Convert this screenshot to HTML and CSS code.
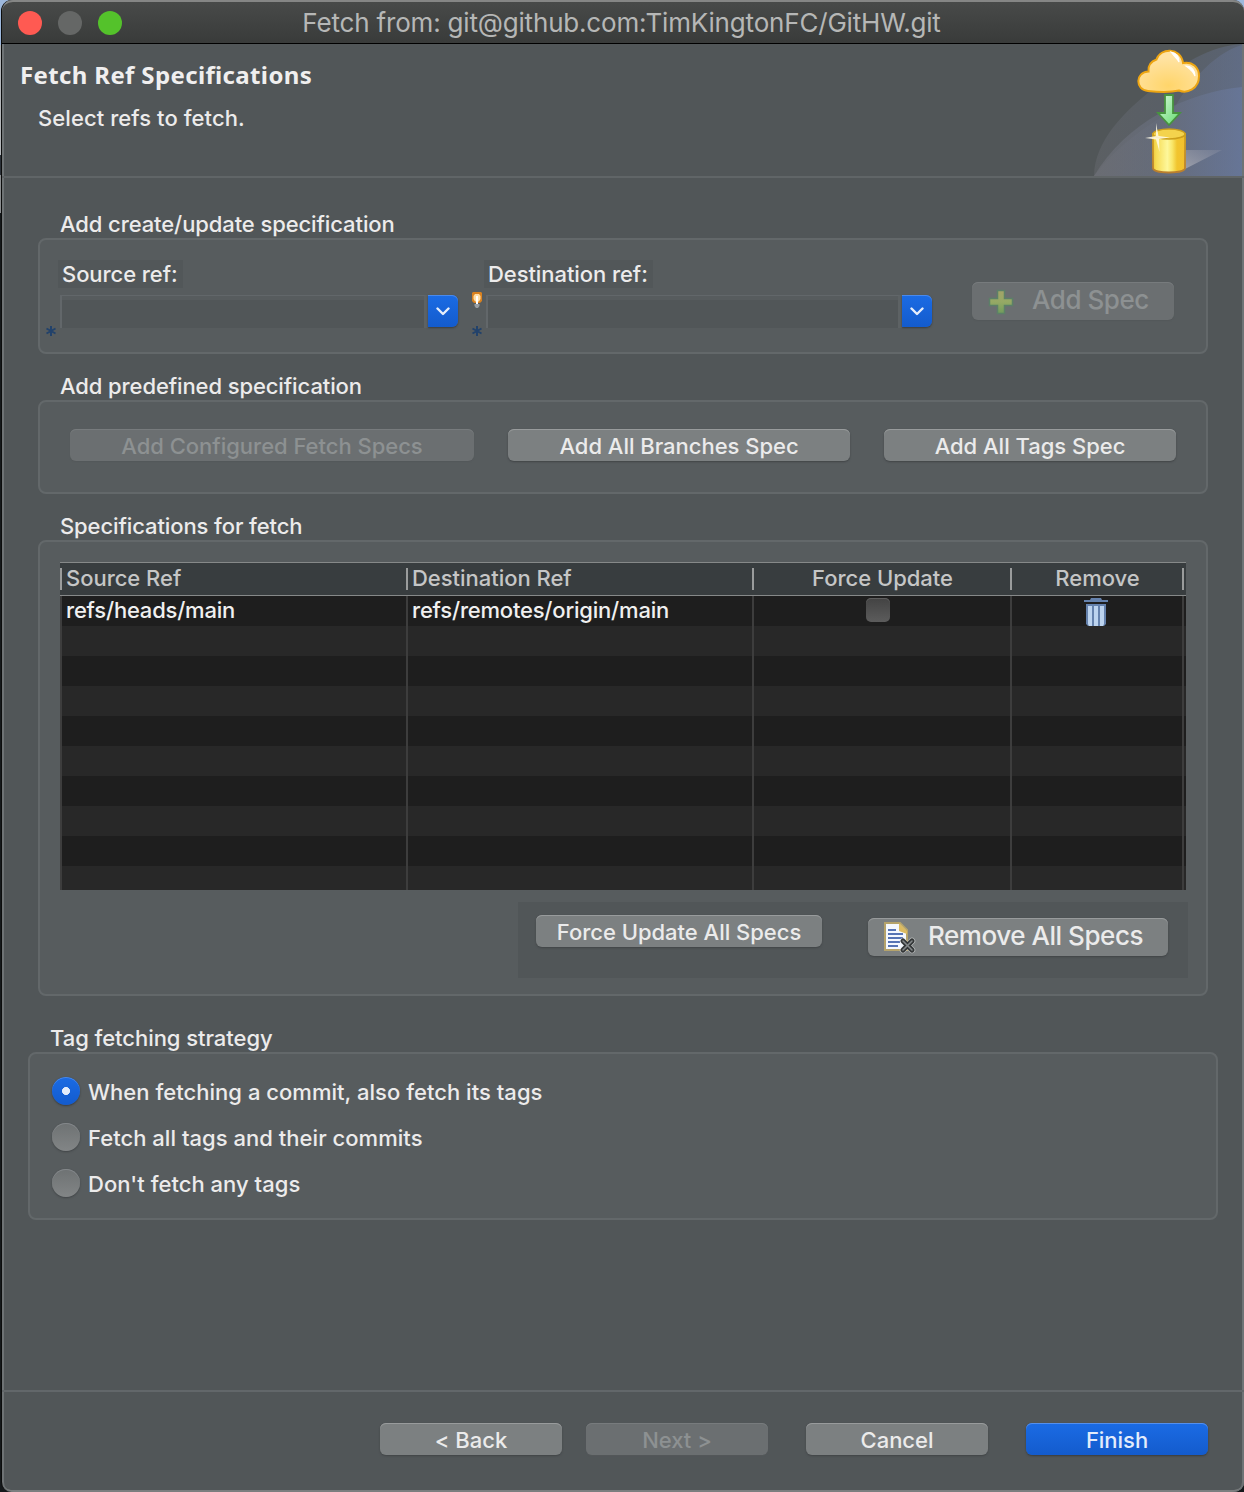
FILE: index.html
```
<!DOCTYPE html>
<html lang="en">
<head>
<meta charset="utf-8">
<title>Fetch from: git@github.com:TimKingtonFC/GitHW.git</title>
<link rel="stylesheet" href="styles.css">
</head>
<body>
<main class="window">
  <header class="titlebar">
    <div class="lights">
      <span class="light light-close"></span>
      <span class="light light-min"></span>
      <span class="light light-zoom"></span>
    </div>
    <div class="window-title">Fetch from: git@github.com:TimKingtonFC/GitHW.git</div>
  </header>

  <section class="banner">
    <div class="banner-text">
      <h1>Fetch Ref Specifications</h1>
      <p>Select refs to fetch.</p>
    </div>
    <svg class="banner-art" width="150" height="132" viewBox="0 0 150 132">
      <defs>
        <linearGradient id="wash" x1="0" x2="1" y1="0" y2="0">
          <stop offset="0" stop-color="#6e7077"/><stop offset=".45" stop-color="#686f7f"/><stop offset="1" stop-color="#6a7aa0"/>
        </linearGradient>
        <radialGradient id="cloud" cx=".5" cy=".85" r=".7">
          <stop offset="0" stop-color="#ffd56a"/><stop offset="1" stop-color="#ffe3a4"/>
        </radialGradient>
        <linearGradient id="arrow" x1="0" x2="1" y1="0" y2="1">
          <stop offset="0" stop-color="#d8f5dc"/><stop offset="1" stop-color="#62dd6c"/>
        </linearGradient>
        <linearGradient id="drum" x1="0" x2="1" y1="0" y2="0">
          <stop offset="0" stop-color="#eec93a"/><stop offset=".1" stop-color="#f6dc55"/><stop offset=".45" stop-color="#fdf79b"/><stop offset=".6" stop-color="#f9e76a"/><stop offset=".75" stop-color="#f1c52f"/><stop offset="1" stop-color="#f3c02c"/>
        </linearGradient>
        <linearGradient id="rim" x1="0" x2="0" y1="0" y2="1">
          <stop offset="0" stop-color="#d3a51c"/><stop offset="1" stop-color="#b97e2e"/>
        </linearGradient>
        <linearGradient id="shade" x1="0" x2="1" y1="1" y2="0">
          <stop offset="0" stop-color="#a6a8b2" stop-opacity=".85"/><stop offset="1" stop-color="#8f94a5" stop-opacity=".3"/>
        </linearGradient>
      </defs>
      <path d="M2 132C3 96 32 68 62 44C88 20 118 2 150 0V132Z" fill="url(#wash)" opacity=".36"/>
      <path d="M2 132C26 102 50 84 82 66C90 46 122 8 150 1V132Z" fill="url(#wash)" opacity=".4"/>
      <path d="M2 132C34 78 96 48 150 43V132Z" fill="url(#wash)" opacity=".65"/>
      <path d="M93 106H130L93 125Z" fill="url(#shade)"/>
      <path d="M56 47C43 46 43 28 56.500 27.500C56 21 60 17 64.500 15.500C68 3.500 89 3 91 19C101 17 107 24 107 32C107 45 95 50 87 46.500C78 48.500 66 48 56 47Z" fill="url(#cloud)" stroke="#eda512" stroke-width="2"/>
      <path d="M79 8C84 9 87 13 87 18C85 14 82 12 79 8ZM94 22C100 22 103 27 103 32C101 27 98 25 94 22Z" fill="#fff" stroke="#fff" stroke-width="1.2"/>
      <path d="M73 51H81V69H88L77 81L66 69H73Z" fill="url(#arrow)" stroke="#47933f" stroke-width="1.8"/>
      <path d="M61 90V124C61 130 93 130 93 124V90Z" fill="url(#drum)" stroke="url(#rim)" stroke-width="1.8"/>
      <ellipse cx="77" cy="90" rx="16" ry="5" fill="#f4d34d" stroke="#cc9f1c" stroke-width="1.6"/>
      <path d="M64 79L66.500 92L78 93.500L67 95L67.500 108L64 95.500L53 94L64 92Z" fill="#fffbe8" opacity=".85"/>
    </svg>
  </section>

  <section class="content">
    <h2 class="group-label">Add create/update specification</h2>
    <div class="group create">
      <div class="field field-src">
        <label class="chip">Source ref:</label>
        <div class="combo">
          <div class="combo-text"></div>
          <div class="combo-btn"><svg width="14" height="9" viewBox="0 0 14 9"><path d="M1.5 1.5L7 7L12.500 1.500" fill="none" stroke="#e6eefb" stroke-width="2.400" stroke-linecap="round" stroke-linejoin="round"/></svg></div>
          <svg class="star" width="12" height="12" viewBox="0 0 12 12"><path d="M6 1V11M1.500 3.500L10.500 8.500M10.500 3.500L1.500 8.500" stroke="#22426b" stroke-width="2"/></svg>
        </div>
      </div>
      <div class="field field-dst">
        <label class="chip">Destination ref:</label>
        <div class="combo">
          <div class="combo-text"></div>
          <div class="combo-btn"><svg width="14" height="9" viewBox="0 0 14 9"><path d="M1.5 1.5L7 7L12.500 1.500" fill="none" stroke="#e6eefb" stroke-width="2.400" stroke-linecap="round" stroke-linejoin="round"/></svg></div>
          <svg class="bulb" width="12" height="16" viewBox="0 0 12 16"><path d="M2 0H10L11 1V9L9 11H3L1 9V1Z" fill="#d9811f"/><path d="M4 2H8L9.500 4V7L8 9.500H4L2.500 7V4Z" fill="#ffdfa6"/><path d="M5 4H7V12H5Z" fill="#fff"/><path d="M3.500 12H8.500V14L7 16H5L3.500 14Z" fill="#9a9fa3"/></svg>
          <svg class="star" width="12" height="12" viewBox="0 0 12 12"><path d="M6 1V11M1.500 3.500L10.500 8.500M10.500 3.500L1.500 8.500" stroke="#22426b" stroke-width="2"/></svg>
        </div>
      </div>
      <button class="btn btn-large btn-off add-spec">
        <svg width="26" height="26" viewBox="0 0 26 26"><defs><linearGradient id="plus" x1="0" x2="0" y1="0" y2="1"><stop offset="0" stop-color="#a3a468"/><stop offset=".5" stop-color="#95a965"/><stop offset="1" stop-color="#6f9c5c"/></linearGradient></defs><path d="M9.500 1.500H16.500V9.500H24.500V16.500H16.500V24.500H9.500V16.500H1.500V9.500H9.500Z" fill="url(#plus)" stroke="#5c8068" stroke-width="1.500"/></svg>
        <span>Add Spec</span>
      </button>
    </div>

    <h2 class="group-label">Add predefined specification</h2>
    <div class="group predefined">
      <button class="btn btn-off configured">Add Configured Fetch Specs</button>
      <button class="btn branches">Add All Branches Spec</button>
      <button class="btn tags">Add All Tags Spec</button>
    </div>

    <h2 class="group-label">Specifications for fetch</h2>
    <div class="group specs">
      <div class="table">
        <div class="row head">
          <div class="cell">Source Ref</div><div class="cell">Destination Ref</div><div class="cell mid">Force Update</div><div class="cell mid">Remove</div><div class="cell"></div>
        </div>
        <div class="row">
          <div class="cell">refs/heads/main</div><div class="cell">refs/remotes/origin/main</div>
          <div class="cell mid"><span class="check"></span></div>
          <div class="cell mid"><svg class="trash" width="24" height="28" viewBox="0 0 24 28"><path d="M7 0H17L18 2H24V4H0V2H6Z" fill="#6582ad"/><path d="M2 6H22V26L20 28H4L2 26Z" fill="#6582ad"/><path d="M4 8H8V28H5L4 26ZM10 8H14V28H10ZM16 8H20V26L19 28H16Z" fill="#bcd3ee"/></svg></div>
          <div class="cell"></div>
        </div>
        <div class="row"><div class="cell"></div><div class="cell"></div><div class="cell"></div><div class="cell"></div><div class="cell"></div></div>
        <div class="row"><div class="cell"></div><div class="cell"></div><div class="cell"></div><div class="cell"></div><div class="cell"></div></div>
        <div class="row"><div class="cell"></div><div class="cell"></div><div class="cell"></div><div class="cell"></div><div class="cell"></div></div>
        <div class="row"><div class="cell"></div><div class="cell"></div><div class="cell"></div><div class="cell"></div><div class="cell"></div></div>
        <div class="row"><div class="cell"></div><div class="cell"></div><div class="cell"></div><div class="cell"></div><div class="cell"></div></div>
        <div class="row"><div class="cell"></div><div class="cell"></div><div class="cell"></div><div class="cell"></div><div class="cell"></div></div>
        <div class="row"><div class="cell"></div><div class="cell"></div><div class="cell"></div><div class="cell"></div><div class="cell"></div></div>
        <div class="row"><div class="cell"></div><div class="cell"></div><div class="cell"></div><div class="cell"></div><div class="cell"></div></div>
        <div class="row last"><div class="cell"></div><div class="cell"></div><div class="cell"></div><div class="cell"></div><div class="cell"></div></div>
      </div>
      <div class="actions">
        <button class="btn force">Force Update All Specs</button>
        <button class="btn btn-large remove-all">
          <svg width="32" height="32" viewBox="0 0 32 32"><path d="M1 1H16L23 8V28H1Z" fill="#f4f8ff" stroke="#b5a36b" stroke-width="2"/><path d="M15 1L23 9V12L15 9Z" fill="#dcbb62"/><path d="M4 8H12M4 12H19M4 16H19M4 20H16M4 24H14" stroke="#5674b5" stroke-width="2"/><path d="M19 19L28 28M28 19L19 28" stroke="#e4e6e6" stroke-width="6.500" stroke-linecap="round" opacity=".55"/><path d="M19 19L28 28M28 19L19 28" stroke="#333637" stroke-width="5" stroke-linecap="round"/><path d="M19 19L28 28M28 19L19 28" stroke="#84898a" stroke-width="1.600" stroke-linecap="round"/></svg>
          <span>Remove All Specs</span>
        </button>
      </div>
    </div>

    <h2 class="group-label strategy-label">Tag fetching strategy</h2>
    <div class="group strategy">
      <label class="option"><span class="radio radio-on"></span>When fetching a commit, also fetch its tags</label>
      <label class="option"><span class="radio"></span>Fetch all tags and their commits</label>
      <label class="option"><span class="radio"></span>Don't fetch any tags</label>
    </div>
  </section>

  <footer class="buttons">
    <button class="btn">&lt; Back</button>
    <button class="btn btn-off next">Next &gt;</button>
    <button class="btn cancel">Cancel</button>
    <button class="btn btn-primary">Finish</button>
  </footer>
</main>
</body>
</html>
```
FILE: styles.css
```
* { box-sizing: border-box; }

body {
  margin: 0;
  height: 1492px;
  overflow: hidden;
  background: linear-gradient(#9db8dc 0 45px, #b4b7ba 45px 155px, #2b3138 155px 175px, #8b8e90 175px 213px, #15191b 213px);
  font: 450 22px/28px Inter, "Liberation Sans", sans-serif;
  letter-spacing: -0.02px;
  color: #ecebeb;
}

h1, h2, p { margin: 0; font-weight: 450; }

.window {
  display: flex;
  flex-direction: column;
  height: 1492px;
  margin-left: 1px;
  border-left: 1px solid #0c0d0d;
  background: #515658;
  border-radius: 11px 11px 10px 10px;
  box-shadow: inset 2px 0 #6e7375, inset -2px 0 #6e7375, inset 0 -2px #7b7e7f;
  overflow: hidden;
}

.titlebar {
  flex: none;
  display: grid;
  grid-template-columns: 104px 1fr 104px;
  align-items: center;
  height: 44px;
  padding: 0 19px 0 16px;
  background: linear-gradient(#484a49, #393b3a);
  border-top: 2px solid #858685;
  border-bottom: 1px solid #000;
  border-radius: 11px 11px 0 0;
}
.lights { display: flex; gap: 16px; }
.light { flex: none; width: 24px; height: 24px; border-radius: 50%; }
.light-close { background: #ff5a52; }
.light-min { background: #656766; }
.light-zoom { background: #54c22b; }
.window-title { text-align: center; white-space: nowrap; font-size: 26px; font-weight: 400; letter-spacing: -0.18px; color: #b6b7b6; }

.banner {
  flex: none;
  display: flex;
  justify-content: space-between;
  height: 134px;
  padding: 0 2px 0 18px;
  border-bottom: 2px solid #606567;
}
.banner h1 {
  margin-top: 17px;
  font: 700 24px/28px "Noto Sans", "Open Sans", sans-serif;
  letter-spacing: 0.36px;
  color: #f0efef;
}
.banner p { margin: 15px 0 0 18px; letter-spacing: 0.07px; }

.content { flex: 1; padding: 32px 36px 0 36px; }
.group-label { height: 28px; padding-left: 22px; font-size: 22px; line-height: 28px; letter-spacing: -0.1px; }
.group {
  border: 2px solid #63686a;
  border-radius: 8px;
  background: #575c5e;
  margin-bottom: 18px;
}

.create { display: flex; height: 116px; padding: 20px 32px 0 20px; }
.field-src { width: 398px; }
.field-dst { width: 446px; margin-left: 28px; }
.chip {
  display: block;
  width: max-content;
  height: 28px;
  margin-left: -2px;
  padding: 0 5px 0 4px;
  background: #525759;
  letter-spacing: -0.07px;
}
.combo { position: relative; display: flex; height: 33px; margin-top: 7px; }
.combo-text {
  flex: 1;
  background: #515658;
  border: solid #62676a;
  border-width: 1px 4px 0 2px;
  border-right-color: #5d6264;
  box-shadow: inset 0 4px #575c5e;
}
.combo-btn {
  display: grid;
  place-items: center;
  width: 30px;
  height: 32px;
  border-radius: 0 6px 6px 0;
  background: linear-gradient(#1b6be4, #135bcd);
  box-shadow: inset 0 1px #4a8aec, 0 1px 2px #383c3e;
}
.star { position: absolute; left: -15px; top: 30px; }
.bulb { position: absolute; left: -15px; top: -3px; }

.btn {
  height: 32px;
  padding: 1px 0 0;
  border: 0;
  border-radius: 6px;
  background: #7c8081;
  box-shadow: inset 0 1px #989b9c, 0 1px 2px #404446;
  font: inherit;
  line-height: 32px;
  letter-spacing: inherit;
  color: #ebebeb;
}
.btn-off { background: #6b6f71; color: #8d9192; box-shadow: inset 0 1px #777b7d, 0 1px 1px #54585a; }
.btn-primary { background: linear-gradient(#1b6be4, #135bcd); box-shadow: inset 0 1px #5590ec, 0 1px 2px #383c3e; color: #e3ecfb; }
.btn-large {
  display: flex;
  align-items: center;
  height: 38px;
  padding-top: 0;
  font-size: 26px;
  letter-spacing: -0.46px;
}
.add-spec { width: 202px; margin: 22px 0 0 40px; padding-left: 16px; gap: 18px; }
.add-spec svg { margin-top: 2px; }
.add-spec span { margin-top: -2px; }

.predefined { display: flex; height: 94px; padding: 27px 30px 0; gap: 34px; }
.configured { width: 404px; }
.branches { width: 342px; }
.tags { width: 292px; }

.specs { height: 456px; padding: 20px 18px 0 20px; margin-bottom: 28px; }
.table {
  width: 1126px;
  height: 328px;
  background: #1e1e1e;
}
.row {
  display: grid;
  grid-template-columns: 346px 346px 258px 172px 4px;
  height: 30px;
  background: #1e1e1e;
  line-height: 28px;
  letter-spacing: -0.2px;
  color: #f0f0f0;
}
.row:nth-child(odd) { background: #282828; }
.cell { padding-left: 4px; border-left: 2px solid #3d3d3d; white-space: nowrap; }
.row .mid { display: flex; justify-content: center; padding-left: 0; }
.row.head {
  height: 34px;
  padding: 5px 0;
  border: solid #868989;
  border-width: 1px 0;
  background: #383d3f;
  line-height: 20px;
  letter-spacing: -0.03px;
  color: #c5c6c6;
}
.head .cell { height: 22px; border-left-color: #9a9c9c; }
.row.head .mid { padding-left: 1px; }
.row.last { height: 24px; }
.check {
  width: 24px;
  height: 24px;
  margin: 2px 8px 0 0;
  border-radius: 5px;
  background: linear-gradient(#434343, #5c5c5c);
  box-shadow: inset 0 1px #5e5e5e;
}
.trash { margin: 2px 2px 0 0; }

.actions {
  display: flex;
  width: 670px;
  height: 76px;
  margin: 12px 0 0 458px;
  padding: 13px 0 0 18px;
  background: #515658;
}
.force { width: 286px; }
.remove-all { width: 300px; margin: 3px 0 0 46px; padding-left: 16px; gap: 12px; }
.remove-all svg { margin-top: 1px; }
.remove-all span { margin-top: -2px; }

.strategy-label { padding-left: 12px; letter-spacing: -0.05px; }
.strategy {
  height: 168px;
  margin: 0 -10px;
  padding: 22px;
}
.option { display: flex; align-items: center; gap: 8px; height: 32px; margin-bottom: 14px; letter-spacing: 0.03px; }
.radio {
  width: 28px;
  height: 28px;
  margin-top: -2px;
  border-radius: 50%;
  background: linear-gradient(#6e7273, #828586);
  box-shadow: inset 0 1px #83878a, 0 1px 2px #404446;
}
.radio-on {
  background: radial-gradient(circle, #e3ecfb 0 3.700px, transparent 4.300px), linear-gradient(#1b6be4, #135bcd);
  box-shadow: inset 0 1px #4a8aec, 0 1px 2px #383c3e;
}

.buttons {
  flex: none;
  display: flex;
  justify-content: flex-end;
  height: 102px;
  padding: 31px 36px 0;
  border-top: 2px solid #62676a;
}
.buttons .btn { width: 182px; }
.buttons .next { margin-left: 24px; }
.buttons .cancel { margin: 0 38px; }
```
